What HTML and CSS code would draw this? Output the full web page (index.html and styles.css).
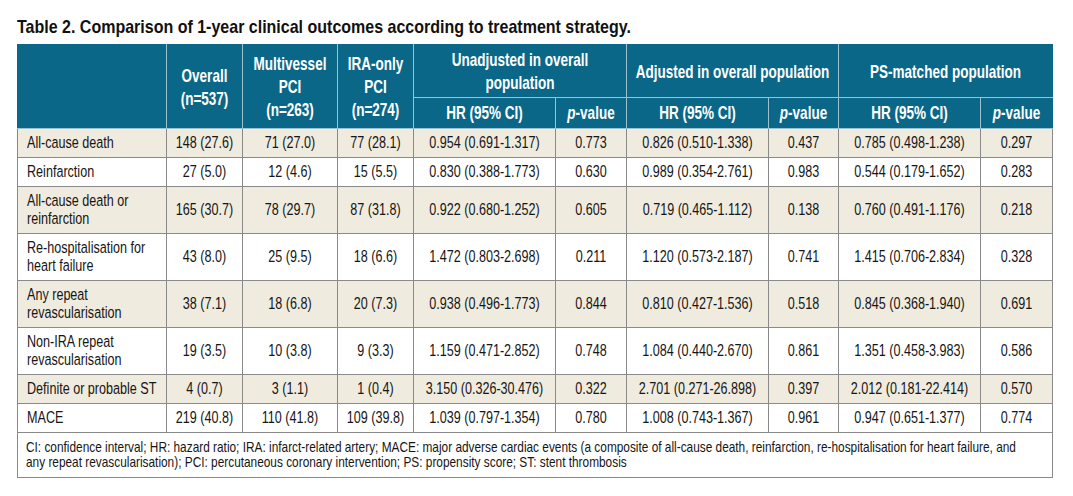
FILE: index.html
```html
<!DOCTYPE html>
<html>
<head>
<meta charset="utf-8">
<link rel="stylesheet" href="styles.css">
</head>
<body>
<div class="page">
  <h1 class="title"><span class="t">Table 2. Comparison of 1-year clinical outcomes according to treatment strategy.</span></h1>
  <table class="tbl">
    <colgroup>
      <col class="c-label"><col class="c-n1"><col class="c-n2"><col class="c-n3">
      <col class="c-hr"><col class="c-p1"><col class="c-hr"><col class="c-p2"><col class="c-hr"><col class="c-p3">
    </colgroup>
    <thead>
      <tr>
        <th rowspan="2"></th>
        <th rowspan="2"><span class="t">Overall<br>(n=537)</span></th>
        <th rowspan="2"><span class="t">Multivessel<br>PCI<br>(n=263)</span></th>
        <th rowspan="2"><span class="t">IRA-only<br>PCI<br>(n=274)</span></th>
        <th colspan="2"><span class="t">Unadjusted in overall<br>population</span></th>
        <th colspan="2"><span class="t">Adjusted in overall population</span></th>
        <th colspan="2"><span class="t">PS-matched population</span></th>
      </tr>
      <tr class="sub">
        <th><span class="t">HR (95% CI)</span></th><th><span class="t"><i>p</i>-value</span></th>
        <th><span class="t">HR (95% CI)</span></th><th><span class="t"><i>p</i>-value</span></th>
        <th><span class="t">HR (95% CI)</span></th><th><span class="t"><i>p</i>-value</span></th>
      </tr>
    </thead>
    <tbody>
      <tr class="alt"><td class="lbl"><span class="t">All-cause death</span></td><td><span class="t">148 (27.6)</span></td><td><span class="t">71 (27.0)</span></td><td><span class="t">77 (28.1)</span></td><td><span class="t">0.954 (0.691-1.317)</span></td><td><span class="t">0.773</span></td><td><span class="t">0.826 (0.510-1.338)</span></td><td><span class="t">0.437</span></td><td><span class="t">0.785 (0.498-1.238)</span></td><td><span class="t">0.297</span></td></tr>
      <tr><td class="lbl"><span class="t">Reinfarction</span></td><td><span class="t">27 (5.0)</span></td><td><span class="t">12 (4.6)</span></td><td><span class="t">15 (5.5)</span></td><td><span class="t">0.830 (0.388-1.773)</span></td><td><span class="t">0.630</span></td><td><span class="t">0.989 (0.354-2.761)</span></td><td><span class="t">0.983</span></td><td><span class="t">0.544 (0.179-1.652)</span></td><td><span class="t">0.283</span></td></tr>
      <tr class="alt"><td class="lbl"><span class="t">All-cause death or<br>reinfarction</span></td><td><span class="t">165 (30.7)</span></td><td><span class="t">78 (29.7)</span></td><td><span class="t">87 (31.8)</span></td><td><span class="t">0.922 (0.680-1.252)</span></td><td><span class="t">0.605</span></td><td><span class="t">0.719 (0.465-1.112)</span></td><td><span class="t">0.138</span></td><td><span class="t">0.760 (0.491-1.176)</span></td><td><span class="t">0.218</span></td></tr>
      <tr><td class="lbl"><span class="t">Re-hospitalisation for<br>heart failure</span></td><td><span class="t">43 (8.0)</span></td><td><span class="t">25 (9.5)</span></td><td><span class="t">18 (6.6)</span></td><td><span class="t">1.472 (0.803-2.698)</span></td><td><span class="t">0.211</span></td><td><span class="t">1.120 (0.573-2.187)</span></td><td><span class="t">0.741</span></td><td><span class="t">1.415 (0.706-2.834)</span></td><td><span class="t">0.328</span></td></tr>
      <tr class="alt"><td class="lbl"><span class="t">Any repeat<br>revascularisation</span></td><td><span class="t">38 (7.1)</span></td><td><span class="t">18 (6.8)</span></td><td><span class="t">20 (7.3)</span></td><td><span class="t">0.938 (0.496-1.773)</span></td><td><span class="t">0.844</span></td><td><span class="t">0.810 (0.427-1.536)</span></td><td><span class="t">0.518</span></td><td><span class="t">0.845 (0.368-1.940)</span></td><td><span class="t">0.691</span></td></tr>
      <tr><td class="lbl"><span class="t">Non-IRA repeat<br>revascularisation</span></td><td><span class="t">19 (3.5)</span></td><td><span class="t">10 (3.8)</span></td><td><span class="t">9 (3.3)</span></td><td><span class="t">1.159 (0.471-2.852)</span></td><td><span class="t">0.748</span></td><td><span class="t">1.084 (0.440-2.670)</span></td><td><span class="t">0.861</span></td><td><span class="t">1.351 (0.458-3.983)</span></td><td><span class="t">0.586</span></td></tr>
      <tr class="alt"><td class="lbl"><span class="t">Definite or probable ST</span></td><td><span class="t">4 (0.7)</span></td><td><span class="t">3 (1.1)</span></td><td><span class="t">1 (0.4)</span></td><td><span class="t">3.150 (0.326-30.476)</span></td><td><span class="t">0.322</span></td><td><span class="t">2.701 (0.271-26.898)</span></td><td><span class="t">0.397</span></td><td><span class="t">2.012 (0.181-22.414)</span></td><td><span class="t">0.570</span></td></tr>
      <tr><td class="lbl"><span class="t">MACE</span></td><td><span class="t">219 (40.8)</span></td><td><span class="t">110 (41.8)</span></td><td><span class="t">109 (39.8)</span></td><td><span class="t">1.039 (0.797-1.354)</span></td><td><span class="t">0.780</span></td><td><span class="t">1.008 (0.743-1.367)</span></td><td><span class="t">0.961</span></td><td><span class="t">0.947 (0.651-1.377)</span></td><td><span class="t">0.774</span></td></tr>
      <tr class="foot"><td colspan="10"><span class="t">CI: confidence interval; HR: hazard ratio; IRA: infarct-related artery; MACE: major adverse cardiac events (a composite of all-cause death, reinfarction, re-hospitalisation for heart failure, and<br>any repeat revascularisation); PCI: percutaneous coronary intervention; PS: propensity score; ST: stent thrombosis</span></td></tr>
    </tbody>
  </table>
</div>
</body>
</html>
```

FILE: styles.css
```css
html, body {
  margin: 0;
  padding: 0;
  background: #ffffff;
  overflow: hidden;
}
body {
  font-family: "Liberation Sans", Arial, sans-serif;
  color: #161616;
}
.page {
  padding: 16px 0 0 17px;
}

/* condensed-type emulation: each text run is narrowed horizontally */
.t {
  display: block;
  white-space: nowrap;
  margin: 0 -40px;
  transform: scaleX(0.75);
  transform-origin: center center;
}

.title {
  margin: 0 0 7px 0;
  font-size: 18.5px;
  line-height: 21px;
  font-weight: bold;
  color: #111;
}
.title .t {
  margin: 0;
  transform: scaleX(0.865);
  transform-origin: left center;
}

.tbl {
  border-collapse: collapse;
  table-layout: fixed;
  width: 1035px;
  border: 1px solid #8a8a8a;
}
.c-label { width: 149px; }
.c-n1 { width: 76px; }
.c-n2 { width: 95px; }
.c-n3 { width: 76px; }
.c-hr { width: 142px; }
.c-p1 { width: 71px; }
.c-p2 { width: 70px; }
.c-p3 { width: 72px; }

.tbl th {
  background: #0b6787;
  color: #ffffff;
  font-weight: bold;
  font-size: 18.5px;
  line-height: 23px;
  padding: 3px 2px;
  text-align: center;
  vertical-align: middle;
  border: 1px solid #9cc2d1;
}
.tbl th .t {
  transform: scaleX(0.73);
}
.tbl thead tr:first-child th {
  border-top-color: #0b6787;
}
.tbl thead tr th:first-child {
  border-left-color: #0b6787;
}
.tbl thead tr:first-child th:last-child,
.tbl .sub th:last-child {
  border-right-color: #0b6787;
}
.tbl .sub th {
  padding: 3px 2px 4px;
}
.tbl th i {
  font-style: italic;
}
.tbl td {
  font-size: 16.8px;
  line-height: 18px;
  padding: 5px 2px;
  text-align: center;
  vertical-align: middle;
  border: 1px solid #8a8a8a;
}
.tbl td.lbl {
  text-align: left;
  padding-left: 9px;
}
.tbl td.lbl .t {
  margin: 0 -80px 0 0;
  transform-origin: left center;
}
.tbl tr.alt td {
  background: #efebdf;
}
.tbl tr.foot td {
  text-align: left;
  font-size: 15px;
  line-height: 15px;
  padding: 6px 8px 8px 8px;
  background: #ffffff;
}
.tbl tr.foot td .t {
  margin: 0 -300px 0 0;
  transform: scaleX(0.79);
  transform-origin: left center;
}
```
